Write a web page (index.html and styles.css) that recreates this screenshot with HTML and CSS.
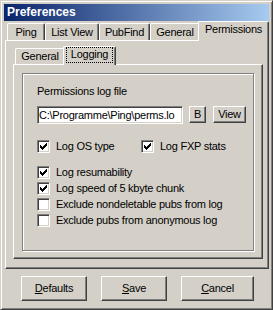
FILE: index.html
```html
<!DOCTYPE html>
<html lang="en">
<head>
    <meta charset="UTF-8">
    <title>Preferences</title>
    <link rel="stylesheet" href="styles.css">
</head>
<body>
    <div class="window">
        <div class="titlebar">Preferences</div>
        <div class="client">
            <div class="tabs">
                <div class="tab tab-ping">Ping</div>
                <div class="tab tab-listview">List View</div>
                <div class="tab tab-pubfind">PubFind</div>
                <div class="tab tab-general">General</div>
                <div class="tab tab-permissions active">Permissions</div>
            </div>
            <div class="panel outer-panel">
                <div class="tabs subtabs">
                    <div class="tab subtab-general">General</div>
                    <div class="tab subtab-logging active"><span class="focus">Logging</span></div>
                </div>
                <div class="panel inner-panel">
                    <div class="group">
                        <div class="caption">Permissions log file</div>
                        <div class="file-row">
                            <input type="text" class="field" value="C:\Programme\Ping\perms.lo" readonly>
                            <button class="btn btn-b">B</button>
                            <button class="btn btn-view">View</button>
                        </div>
                        <div class="check-row first-row">
                            <label class="check col-left">
                                <span class="box"><svg width="11" height="11" viewBox="1 1 11 11"><path d="M3 5h1v3H3zM4 6h1v3H4zM5 7h1v3H5zM6 6h1v3H6zM7 5h1v3H7zM8 4h1v3H8zM9 3h1v3H9z"/></svg></span>
                                <span>Log OS type</span>
                            </label>
                            <label class="check">
                                <span class="box"><svg width="11" height="11" viewBox="1 1 11 11"><path d="M3 5h1v3H3zM4 6h1v3H4zM5 7h1v3H5zM6 6h1v3H6zM7 5h1v3H7zM8 4h1v3H8zM9 3h1v3H9z"/></svg></span>
                                <span>Log FXP stats</span>
                            </label>
                        </div>
                        <div class="check-list">
                            <label class="check">
                                <span class="box"><svg width="11" height="11" viewBox="1 1 11 11"><path d="M3 5h1v3H3zM4 6h1v3H4zM5 7h1v3H5zM6 6h1v3H6zM7 5h1v3H7zM8 4h1v3H8zM9 3h1v3H9z"/></svg></span>
                                <span>Log resumability</span>
                            </label>
                            <label class="check">
                                <span class="box"><svg width="11" height="11" viewBox="1 1 11 11"><path d="M3 5h1v3H3zM4 6h1v3H4zM5 7h1v3H5zM6 6h1v3H6zM7 5h1v3H7zM8 4h1v3H8zM9 3h1v3H9z"/></svg></span>
                                <span>Log speed of 5 kbyte chunk</span>
                            </label>
                            <label class="check">
                                <span class="box"></span>
                                <span>Exclude nondeletable pubs from log</span>
                            </label>
                            <label class="check">
                                <span class="box"></span>
                                <span>Exclude pubs from anonymous log</span>
                            </label>
                        </div>
                    </div>
                </div>
            </div>
            <div class="dialog-buttons">
                <button class="btn dlg-btn"><u>D</u>efaults</button>
                <button class="btn dlg-btn"><u>S</u>ave</button>
                <button class="btn dlg-btn btn-cancel"><u>C</u>ancel</button>
            </div>
        </div>
    </div>
</body>
</html>
```

FILE: styles.css
```css
* {
    box-sizing: border-box;
    margin: 0;
    padding: 0;
}

body {
    background-color: #d4d0c8;
    font-family: "Liberation Sans", Arial, sans-serif;
    font-size: 11px;
    line-height: 13px;
    letter-spacing: -0.25px;
    color: #000;
}

button,
input {
    font: inherit;
    letter-spacing: inherit;
    color: inherit;
}

.window {
    width: 273px;
    height: 310px;
    padding: 3px;
    background-color: #d4d0c8;
    border: 1px solid;
    border-color: #d4d0c8 #404040 #404040 #d4d0c8;
    box-shadow: inset 1px 1px #fff, inset -1px -1px #808080;
}

.titlebar {
    height: 17px;
    padding-left: 3px;
    background: linear-gradient(to right, #0a246a, #a6caf0);
    color: #fff;
    font-size: 12px;
    font-weight: bold;
    line-height: 17px;
    letter-spacing: 0;
}

.client {
    padding-left: 1px;
}

/* tab strips */
.tabs {
    display: flex;
    align-items: flex-end;
    height: 19px;
    padding-left: 2px;
}

.tab {
    height: 17px;
    padding-top: 2px;
    background-color: #d4d0c8;
    border: 1px solid;
    border-bottom: none;
    border-color: #fff #404040 #fff #fff;
    border-radius: 2px 2px 0 0;
    box-shadow: inset -1px 0 #808080;
    text-align: center;
    white-space: nowrap;
}

.tab.active {
    position: relative;
    z-index: 1;
    height: 20px;
    padding-top: 1px;
    margin: 0 -2px -1px;
}

.tab-ping { width: 38px; }
.tab-listview { width: 54px; }
.tab-pubfind { width: 51px; }
.tab-general { width: 50px; }
.tab-permissions { width: 71px; }

.subtabs {
    height: 18px;
}

.subtabs .tab {
    height: 16px;
    padding-top: 1px;
}

.subtabs .tab.active {
    height: 19px;
    padding-top: 0;
}

.subtab-general { width: 50px; }
.subtab-logging { width: 53px; }

.focus {
    display: block;
    height: 16px;
    margin: 0 2px;
    border: 1px dotted #000;
    line-height: 13px;
}

/* panels */
.panel {
    border: 1px solid;
    border-color: #fff #404040 #404040 #fff;
    box-shadow: inset -1px -1px #808080;
}

.outer-panel {
    height: 229px;
    padding: 5px 5px 0 7px;
}

.inner-panel {
    height: 195px;
    padding: 8px 0 0 8px;
}

.group {
    width: 232px;
    height: 178px;
    padding: 11px 0 0 14px;
    border: 1px solid #808080;
    box-shadow: inset 1px 1px #fff, 1px 1px #fff;
}

.file-row {
    display: flex;
    align-items: flex-start;
    margin-top: 8px;
}

.field {
    width: 146px;
    height: 18px;
    padding-left: 1px;
    background-color: #fff;
    border: 1px solid;
    border-color: #808080 #fff #fff #808080;
    box-shadow: inset 1px 1px #404040, inset -1px -1px #d4d0c8;
    outline: none;
}

/* buttons */
.btn {
    background-color: #d4d0c8;
    border: 1px solid;
    border-color: #fff #404040 #404040 #fff;
    box-shadow: inset -1px -1px #808080;
    text-align: center;
    cursor: pointer;
}

.btn-b {
    width: 17px;
    height: 17px;
    margin-left: 6px;
}

.btn-view {
    width: 33px;
    height: 17px;
    margin-left: 7px;
}

/* checkboxes */
.check-row {
    display: flex;
    margin-top: 16px;
}

.col-left {
    width: 104px;
}

.check-list {
    display: flex;
    flex-direction: column;
    gap: 3px;
    margin-top: 13px;
}

.check {
    display: flex;
    align-items: center;
    gap: 6px;
    height: 13px;
    white-space: nowrap;
}

.box {
    display: block;
    flex-shrink: 0;
    width: 13px;
    height: 13px;
    background-color: #fff;
    border: 1px solid;
    border-color: #808080 #fff #fff #808080;
    box-shadow: inset 1px 1px #404040, inset -1px -1px #d4d0c8;
}

.box svg {
    display: block;
    shape-rendering: crispEdges;
}

/* dialog buttons */
.dialog-buttons {
    display: flex;
    gap: 14px;
    margin-top: 7px;
    padding-left: 16px;
}

.dlg-btn {
    width: 66px;
    height: 25px;
}

.btn-cancel {
    width: 73px;
}
```
